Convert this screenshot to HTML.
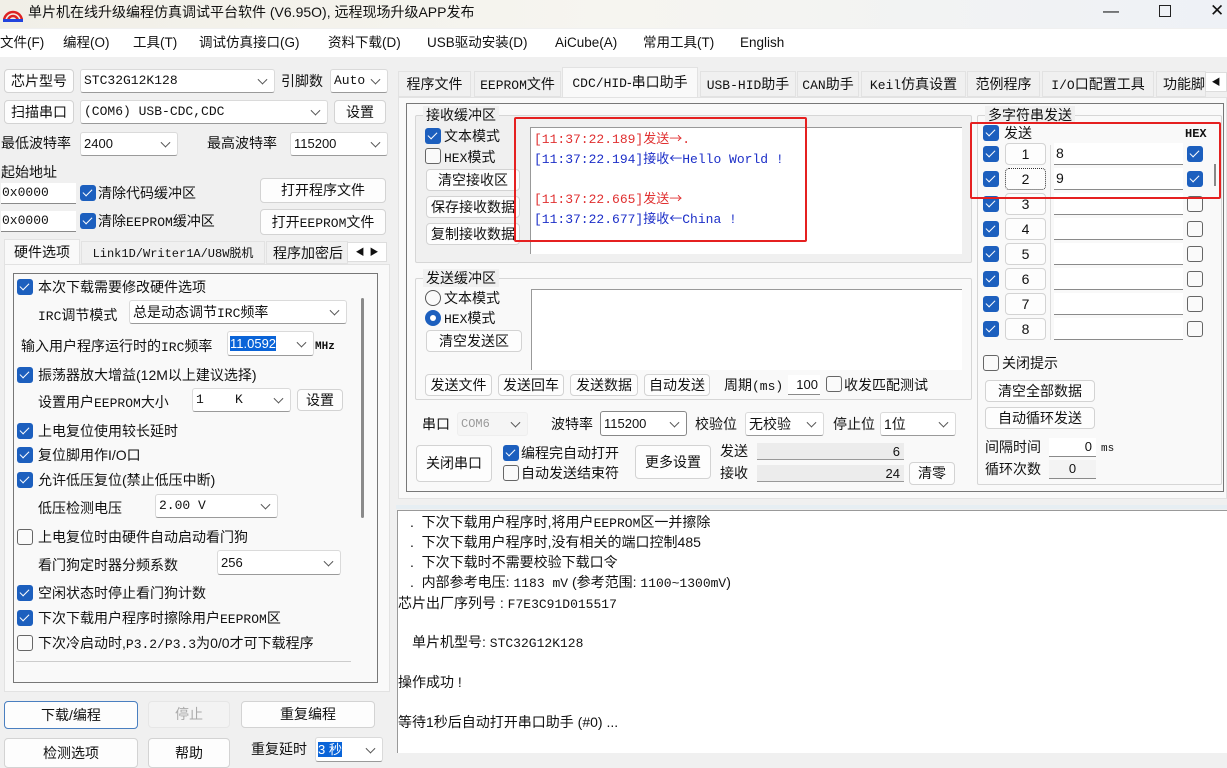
<!DOCTYPE html>
<html><head><meta charset="utf-8">
<style>
*{box-sizing:border-box;margin:0;padding:0}
body{width:1227px;height:763px;overflow:hidden;background:#f0f0f0;position:relative;font-family:"Liberation Sans","Noto Sans CJK SC",sans-serif;font-size:14px;color:#111}
.a{position:absolute;white-space:nowrap}
.t{position:absolute;white-space:nowrap;line-height:18px}
.m{font-family:"Liberation Mono","Noto Sans CJK SC",monospace;font-size:13px}
.btn{position:absolute;background:#fdfdfd;border:1px solid #d3d3d3;border-radius:4px;text-align:center;white-space:nowrap;font-size:14px}
.cmb{position:absolute;background:#fff;border:1px solid #dadada;border-bottom-color:#9a9a9a;border-radius:3px;white-space:nowrap;padding-left:3px;font-size:13px}
.cmb::after{content:"";position:absolute;right:8px;top:50%;width:6px;height:6px;border-right:1px solid #555;border-bottom:1px solid #555;transform:translateY(-70%) rotate(45deg)}
.cb{position:absolute;width:16px;height:16px;border-radius:3px;background:#1c5fbe}
.cb::after{content:"";position:absolute;left:5px;top:2px;width:4px;height:8px;border-right:1.6px solid #fff;border-bottom:1.6px solid #fff;transform:rotate(45deg)}
.ub{position:absolute;width:16px;height:16px;border-radius:3px;background:#fafafa;border:1px solid #666}
.inp{position:absolute;background:#fff;border-bottom:1px solid #8a8a8a;white-space:nowrap}
.grp{position:absolute;border:1px solid #d6d6d6;border-radius:2px}
.tab{position:absolute;background:#f0f0f0;border:1px solid #e2e2e2;text-align:center;white-space:nowrap;font-size:14px;line-height:24px}
.mn{font-size:13.5px}
</style></head><body>
<div class="a" style="left:0;top:0;width:1227px;height:28px;background:linear-gradient(90deg,#f1efe7,#f6f5f0 50%,#eef1f6)"></div>
<svg class="a" style="left:3px;top:5px" width="20" height="18" viewBox="0 0 20 18"><path d="M1 16 A9 9 0 0 1 19 16" fill="none" stroke="#d22" stroke-width="2.5"/><path d="M5 16 A5 5 0 0 1 15 16" fill="none" stroke="#d22" stroke-width="2.5"/><rect x="0" y="14" width="20" height="3" fill="#24d"/></svg>
<div class="t" style="left:28px;top:3px;font-size:14px">单片机在线升级编程仿真调试平台软件 (V6.95O), 远程现场升级APP发布</div>
<div class="t" style="left:1103px;top:3px;font-size:16px">—</div>
<div class="a" style="left:1159px;top:5px;width:12px;height:12px;border:1px solid #222"></div>
<div class="t" style="left:1210px;top:2px;font-size:17px">✕</div>
<div class="a" style="left:0;top:29px;width:1227px;height:28px;background:#fff"></div>
<div class="t mn" style="left:0;top:34px">文件(F)</div>
<div class="t mn" style="left:63px;top:34px">编程(O)</div>
<div class="t mn" style="left:133px;top:34px">工具(T)</div>
<div class="t mn" style="left:199px;top:34px">调试仿真接口(G)</div>
<div class="t mn" style="left:328px;top:34px">资料下载(D)</div>
<div class="t mn" style="left:427px;top:34px">USB驱动安装(D)</div>
<div class="t mn" style="left:555px;top:34px">AiCube(A)</div>
<div class="t mn" style="left:643px;top:34px">常用工具(T)</div>
<div class="t mn" style="left:740px;top:34px">English</div>

<div class="btn" style="left:4px;top:69px;width:70px;height:24px;line-height:22px">芯片型号</div>
<div class="cmb m" style="left:80px;top:69px;width:195px;height:24px;line-height:22px">STC32G12K128</div>
<div class="t" style="left:281px;top:72px">引脚数</div>
<div class="cmb m" style="left:330px;top:69px;width:58px;height:24px;line-height:22px">Auto</div>
<div class="btn" style="left:4px;top:100px;width:70px;height:24px;line-height:22px">扫描串口</div>
<div class="cmb m" style="left:80px;top:100px;width:248px;height:24px;line-height:22px">(COM6) USB-CDC,CDC</div>
<div class="btn" style="left:334px;top:100px;width:52px;height:24px;line-height:22px">设置</div>
<div class="t" style="left:1px;top:134px">最低波特率</div>
<div class="cmb" style="left:80px;top:132px;width:98px;height:24px;line-height:22px">2400</div>
<div class="t" style="left:207px;top:134px">最高波特率</div>
<div class="cmb" style="left:290px;top:132px;width:98px;height:24px;line-height:22px">115200</div>
<div class="t" style="left:1px;top:163px">起始地址</div>
<div class="inp m" style="left:1px;top:183px;width:75px;height:21px;line-height:20px;padding-left:1px">0x0000</div>
<div class="cb" style="left:80px;top:185px"></div>
<div class="t" style="left:98px;top:184px">清除代码缓冲区</div>
<div class="btn" style="left:260px;top:178px;width:126px;height:25px;line-height:23px">打开程序文件</div>
<div class="inp m" style="left:1px;top:211px;width:75px;height:21px;line-height:20px;padding-left:1px">0x0000</div>
<div class="cb" style="left:80px;top:213px"></div>
<div class="t" style="left:98px;top:212px">清除<span class="m">EEPROM</span>缓冲区</div>
<div class="btn" style="left:260px;top:209px;width:126px;height:26px;line-height:24px">打开<span class="m">EEPROM</span>文件</div>
<div class="tab" style="left:4px;top:239px;width:76px;height:26px;background:#f9f9f9;border-bottom:none">硬件选项</div>
<div class="tab m" style="left:81px;top:241px;width:184px;height:23px;line-height:22px;font-size:12px">Link1D/Writer1A/U8W<span style="font-family:'Noto Sans CJK SC'">脱机</span></div>
<div class="tab" style="left:266px;top:241px;width:82px;height:23px;line-height:22px;overflow:hidden;text-align:left;padding-left:6px">程序加密后</div>
<div class="a" style="left:347px;top:242px;width:40px;height:20px;background:#fff;border:1px solid #ddd;font-size:9px;line-height:18px;text-align:center">◀ &nbsp;▶</div>
<div class="a" style="left:4px;top:264px;width:386px;height:428px;background:#f9f9f9;border:1px solid #e2e2e2"></div>
<div class="a" style="left:13px;top:273px;width:365px;height:410px;border:1px solid #777"></div>
<div class="a" style="left:361px;top:298px;width:3px;height:220px;background:#8a8a8a;border-radius:2px"></div>
<div class="a" style="left:16px;top:661px;width:335px;height:1px;background:#ccc"></div>

<div class="cb" style="left:17px;top:279px"></div><div class="t" style="left:38px;top:278px">本次下载需要修改硬件选项</div>
<div class="t" style="left:38px;top:306px"><span class="m">IRC</span>调节模式</div>
<div class="cmb" style="left:129px;top:300px;width:218px;height:24px;line-height:22px;font-size:14px">总是动态调节<span class="m">IRC</span>频率</div>
<div class="t" style="left:21px;top:337px">输入用户程序运行时的<span class="m">IRC</span>频率</div>
<div class="cmb" style="left:227px;top:331px;width:87px;height:25px;line-height:23px;padding-left:2px"><span style="background:#0a64d8;color:#fff">11.0592</span></div>
<div class="t m" style="left:315px;top:338px;font-size:11px;font-weight:bold">MHz</div>
<div class="cb" style="left:17px;top:367px"></div><div class="t" style="left:38px;top:366px">振荡器放大增益(12M以上建议选择)</div>
<div class="t" style="left:38px;top:393px">设置用户<span class="m">EEPROM</span>大小</div>
<div class="cmb m" style="left:192px;top:388px;width:99px;height:24px;line-height:22px">1&nbsp;&nbsp;&nbsp;&nbsp;K</div>
<div class="btn" style="left:297px;top:389px;width:46px;height:22px;line-height:20px">设置</div>
<div class="cb" style="left:17px;top:423px"></div><div class="t" style="left:38px;top:422px">上电复位使用较长延时</div>
<div class="cb" style="left:17px;top:447px"></div><div class="t" style="left:38px;top:446px">复位脚用作I/O口</div>
<div class="cb" style="left:17px;top:472px"></div><div class="t" style="left:38px;top:471px">允许低压复位(禁止低压中断)</div>
<div class="t" style="left:38px;top:499px">低压检测电压</div>
<div class="cmb m" style="left:155px;top:494px;width:123px;height:24px;line-height:22px">2.00 V</div>
<div class="ub" style="left:17px;top:529px"></div><div class="t" style="left:38px;top:528px">上电复位时由硬件自动启动看门狗</div>
<div class="t" style="left:38px;top:556px">看门狗定时器分频系数</div>
<div class="cmb" style="left:217px;top:550px;width:124px;height:25px;line-height:23px">256</div>
<div class="cb" style="left:17px;top:585px"></div><div class="t" style="left:38px;top:584px">空闲状态时停止看门狗计数</div>
<div class="cb" style="left:17px;top:610px"></div><div class="t" style="left:38px;top:609px">下次下载用户程序时擦除用户<span class="m">EEPROM</span>区</div>
<div class="ub" style="left:17px;top:635px"></div><div class="t" style="left:38px;top:634px">下次冷启动时,<span class="m">P3.2/P3.3</span>为0/0才可下载程序</div>

<div class="btn" style="left:4px;top:701px;width:134px;height:28px;line-height:26px;border:1.5px solid #4a7fc0">下载/编程</div>
<div class="btn" style="left:148px;top:701px;width:82px;height:27px;line-height:25px;color:#aaa;background:#f3f3f3;border-color:#e6e6e6">停止</div>
<div class="btn" style="left:241px;top:701px;width:134px;height:27px;line-height:25px">重复编程</div>
<div class="btn" style="left:4px;top:738px;width:134px;height:30px;line-height:28px">检测选项</div>
<div class="btn" style="left:148px;top:738px;width:82px;height:30px;line-height:28px">帮助</div>
<div class="t" style="left:251px;top:740px">重复延时</div>
<div class="cmb" style="left:315px;top:737px;width:68px;height:25px;line-height:23px;padding-left:2px"><span style="background:#0a64d8;color:#fff">3 秒</span></div>

<div class="tab" style="left:398px;top:71px;width:73px;height:26px">程序文件</div>
<div class="tab" style="left:474px;top:71px;width:87px;height:26px"><span class="m">EEPROM</span>文件</div>
<div class="tab" style="left:562px;top:67px;width:136px;height:31px;background:#f9f9f9;line-height:28px;border-bottom:none"><span class="m">CDC/HID</span>-串口助手</div>
<div class="tab" style="left:700px;top:71px;width:96px;height:26px"><span class="m">USB-HID</span>助手</div>
<div class="tab" style="left:797px;top:71px;width:62px;height:26px"><span class="m">CAN</span>助手</div>
<div class="tab" style="left:861px;top:71px;width:105px;height:26px"><span class="m">Keil</span>仿真设置</div>
<div class="tab" style="left:967px;top:71px;width:73px;height:26px">范例程序</div>
<div class="tab" style="left:1042px;top:71px;width:112px;height:26px"><span class="m">I/O</span>口配置工具</div>
<div class="tab" style="left:1156px;top:71px;width:50px;height:26px;overflow:hidden;text-align:left;padding-left:6px">功能脚</div>
<div class="a" style="left:1205px;top:72px;width:22px;height:20px;background:#fff;border:1px solid #ddd;font-size:9px;line-height:18px;text-align:center">◀</div>
<div class="a" style="left:398px;top:97px;width:829px;height:402px;background:#f9f9f9;border:1px solid #e2e2e2"></div>
<div class="a" style="left:406px;top:103px;width:818px;height:389px;border:1px solid #777"></div>

<div class="grp" style="left:415px;top:115px;width:557px;height:148px;background:#f0f0f0"></div>
<div class="t" style="left:423px;top:106px;background:#f0f0f0;padding:0 3px">接收缓冲区</div>
<div class="cb" style="left:425px;top:128px"></div><div class="t" style="left:444px;top:127px">文本模式</div>
<div class="ub" style="left:425px;top:148px"></div><div class="t" style="left:444px;top:148px"><span class="m">HEX</span>模式</div>
<div class="btn" style="left:426px;top:169px;width:94px;height:22px;line-height:20px">清空接收区</div>
<div class="btn" style="left:426px;top:196px;width:94px;height:22px;line-height:20px">保存接收数据</div>
<div class="btn" style="left:426px;top:223px;width:94px;height:22px;line-height:20px">复制接收数据</div>
<div class="a" style="left:530px;top:127px;width:432px;height:127px;background:#fff;border-left:1px solid #999;border-top:1px solid #999"></div>
<div class="t m" style="left:534px;top:129px;color:#e03030">[11:37:22.189]<span style="font-family:'Noto Sans CJK SC'">发送→</span>.</div>
<div class="t m" style="left:534px;top:149px;color:#1c2fc8">[11:37:22.194]<span style="font-family:'Noto Sans CJK SC'">接收←</span>Hello World !</div>
<div class="t m" style="left:534px;top:189px;color:#e03030">[11:37:22.665]<span style="font-family:'Noto Sans CJK SC'">发送→</span></div>
<div class="t m" style="left:534px;top:209px;color:#1c2fc8">[11:37:22.677]<span style="font-family:'Noto Sans CJK SC'">接收←</span>China !</div>
<div class="a" style="left:514px;top:117px;width:293px;height:125px;border:2px solid #e52020;border-radius:2px"></div>

<div class="grp" style="left:415px;top:278px;width:557px;height:122px"></div>
<div class="t" style="left:423px;top:269px;background:#f0f0f0;padding:0 3px">发送缓冲区</div>
<div class="a" style="left:425px;top:290px;width:16px;height:16px;border:1px solid #555;border-radius:50%;background:#fafafa"></div><div class="t" style="left:444px;top:289px">文本模式</div>
<div class="a" style="left:425px;top:310px;width:16px;height:16px;border-radius:50%;background:#1c5fbe"></div><div class="a" style="left:430px;top:315px;width:6px;height:6px;border-radius:50%;background:#fff"></div><div class="t" style="left:444px;top:309px"><span class="m">HEX</span>模式</div>
<div class="btn" style="left:426px;top:330px;width:96px;height:22px;line-height:20px">清空发送区</div>
<div class="a" style="left:531px;top:289px;width:431px;height:81px;background:#fff;border-left:1px solid #999;border-top:1px solid #999"></div>
<div class="btn" style="left:425px;top:374px;width:67px;height:22px;line-height:20px">发送文件</div>
<div class="btn" style="left:498px;top:374px;width:66px;height:22px;line-height:20px">发送回车</div>
<div class="btn" style="left:570px;top:374px;width:68px;height:22px;line-height:20px">发送数据</div>
<div class="btn" style="left:644px;top:374px;width:66px;height:22px;line-height:20px">自动发送</div>
<div class="t" style="left:724px;top:376px">周期<span class="m">(ms)</span></div>
<div class="inp" style="left:788px;top:375px;width:32px;height:20px;line-height:19px;font-size:13px;text-align:right;padding-right:2px">100</div>
<div class="ub" style="left:826px;top:376px"></div><div class="t" style="left:844px;top:376px">收发匹配测试</div>

<div class="t" style="left:422px;top:415px">串口</div>
<div class="cmb m" style="left:457px;top:412px;width:71px;height:24px;line-height:22px;background:#f5f5f5;border-color:#eee;color:#999;font-size:12px">COM6</div>
<div class="t" style="left:551px;top:415px">波特率</div>
<div class="cmb" style="left:600px;top:411px;width:87px;height:25px;line-height:23px;border-color:#888">115200</div>
<div class="t" style="left:695px;top:415px">校验位</div>
<div class="cmb" style="left:745px;top:412px;width:79px;height:24px;line-height:22px;font-size:14px">无校验</div>
<div class="t" style="left:833px;top:415px">停止位</div>
<div class="cmb" style="left:880px;top:412px;width:76px;height:24px;line-height:22px;font-size:14px">1位</div>
<div class="btn" style="left:416px;top:445px;width:76px;height:37px;line-height:35px">关闭串口</div>
<div class="cb" style="left:503px;top:445px"></div><div class="t" style="left:521px;top:444px">编程完自动打开</div>
<div class="ub" style="left:503px;top:465px"></div><div class="t" style="left:521px;top:464px">自动发送结束符</div>
<div class="btn" style="left:635px;top:445px;width:76px;height:34px;line-height:32px">更多设置</div>
<div class="t" style="left:720px;top:442px">发送</div>
<div class="t" style="left:720px;top:464px">接收</div>
<div class="a" style="left:757px;top:443px;width:147px;height:17px;background:#ececec;border-bottom:1px solid #999;text-align:right;padding-right:4px;font-size:13px;line-height:17px">6</div>
<div class="a" style="left:757px;top:465px;width:147px;height:17px;background:#ececec;border-bottom:1px solid #999;text-align:right;padding-right:4px;font-size:13px;line-height:17px">24</div>
<div class="btn" style="left:909px;top:462px;width:46px;height:23px;line-height:21px">清零</div>

<div class="grp" style="left:977px;top:115px;width:245px;height:370px"></div>
<div class="t" style="left:985px;top:106px;background:#f0f0f0;padding:0 3px">多字符串发送</div>
<div class="a" style="left:1050px;top:145px;width:1px;height:195px;background:#ddd"></div>
<div class="cb" style="left:983px;top:125px"></div><div class="t" style="left:1004px;top:124px">发送</div>
<div class="t m" style="left:1185px;top:125px;font-size:12px;font-weight:bold">HEX</div>
<div class="a" style="left:1214px;top:164px;width:2px;height:22px;background:#888"></div>

<div class="cb" style="left:983px;top:146px"></div><div class="btn" style="left:1005px;top:143px;width:41px;height:22px;line-height:20px">1</div><div class="inp" style="left:1054px;top:143px;width:129px;height:22px;line-height:21px;padding-left:2px">8</div><div class="cb" style="left:1187px;top:146px"></div>
<div class="cb" style="left:983px;top:171px"></div><div class="btn" style="left:1005px;top:168px;width:41px;height:22px;line-height:20px;border:1px dotted #333">2</div><div class="inp" style="left:1054px;top:168px;width:129px;height:22px;line-height:21px;padding-left:2px">9</div><div class="cb" style="left:1187px;top:171px"></div>
<div class="cb" style="left:983px;top:196px"></div><div class="btn" style="left:1005px;top:193px;width:41px;height:22px;line-height:20px">3</div><div class="inp" style="left:1054px;top:193px;width:129px;height:22px"></div><div class="ub" style="left:1187px;top:196px"></div>
<div class="cb" style="left:983px;top:221px"></div><div class="btn" style="left:1005px;top:218px;width:41px;height:22px;line-height:20px">4</div><div class="inp" style="left:1054px;top:218px;width:129px;height:22px"></div><div class="ub" style="left:1187px;top:221px"></div>
<div class="cb" style="left:983px;top:246px"></div><div class="btn" style="left:1005px;top:243px;width:41px;height:22px;line-height:20px">5</div><div class="inp" style="left:1054px;top:243px;width:129px;height:22px"></div><div class="ub" style="left:1187px;top:246px"></div>
<div class="cb" style="left:983px;top:271px"></div><div class="btn" style="left:1005px;top:268px;width:41px;height:22px;line-height:20px">6</div><div class="inp" style="left:1054px;top:268px;width:129px;height:22px"></div><div class="ub" style="left:1187px;top:271px"></div>
<div class="cb" style="left:983px;top:296px"></div><div class="btn" style="left:1005px;top:293px;width:41px;height:22px;line-height:20px">7</div><div class="inp" style="left:1054px;top:293px;width:129px;height:22px"></div><div class="ub" style="left:1187px;top:296px"></div>
<div class="cb" style="left:983px;top:321px"></div><div class="btn" style="left:1005px;top:318px;width:41px;height:22px;line-height:20px">8</div><div class="inp" style="left:1054px;top:318px;width:129px;height:22px"></div><div class="ub" style="left:1187px;top:321px"></div>
<div class="a" style="left:970px;top:122px;width:251px;height:77px;border:2px solid #e52020;border-radius:2px"></div>

<div class="ub" style="left:983px;top:355px"></div><div class="t" style="left:1002px;top:354px">关闭提示</div>
<div class="btn" style="left:985px;top:380px;width:110px;height:22px;line-height:20px">清空全部数据</div>
<div class="btn" style="left:985px;top:407px;width:110px;height:22px;line-height:20px">自动循环发送</div>
<div class="t" style="left:985px;top:438px">间隔时间</div>
<div class="inp" style="left:1049px;top:438px;width:47px;height:19px;line-height:18px;text-align:right;padding-right:4px;font-size:13px">0</div>
<div class="t m" style="left:1101px;top:440px;font-size:11px">ms</div>
<div class="t" style="left:985px;top:460px">循环次数</div>
<div class="inp" style="left:1049px;top:460px;width:47px;height:19px;line-height:18px;text-align:center;font-size:13px;background:#f3f3f3">0</div>

<div class="a" style="left:396px;top:505px;width:831px;height:4px;background:#e6eef3"></div>
<div class="a" style="left:397px;top:510px;width:830px;height:243px;background:#fff;border-left:1px solid #999;border-top:1px solid #999"></div>
<div class="t" style="left:410px;top:513px">.&nbsp; 下次下载用户程序时,将用户<span class="m">EEPROM</span>区一并擦除</div>
<div class="t" style="left:410px;top:533px">.&nbsp; 下次下载用户程序时,没有相关的端口控制485</div>
<div class="t" style="left:410px;top:553px">.&nbsp; 下次下载时不需要校验下载口令</div>
<div class="t" style="left:410px;top:573px">.&nbsp; 内部参考电压: <span class="m">1183 mV</span> (参考范围: <span class="m">1100~1300mV</span>)</div>
<div class="t" style="left:398px;top:594px">芯片出厂序列号 : <span class="m">F7E3C91D015517</span></div>
<div class="t" style="left:412px;top:633px">单片机型号: <span class="m">STC32G12K128</span></div>
<div class="t" style="left:398px;top:673px">操作成功 !</div>
<div class="t" style="left:398px;top:713px">等待1秒后自动打开串口助手 (#0) ...</div>
</body></html>
